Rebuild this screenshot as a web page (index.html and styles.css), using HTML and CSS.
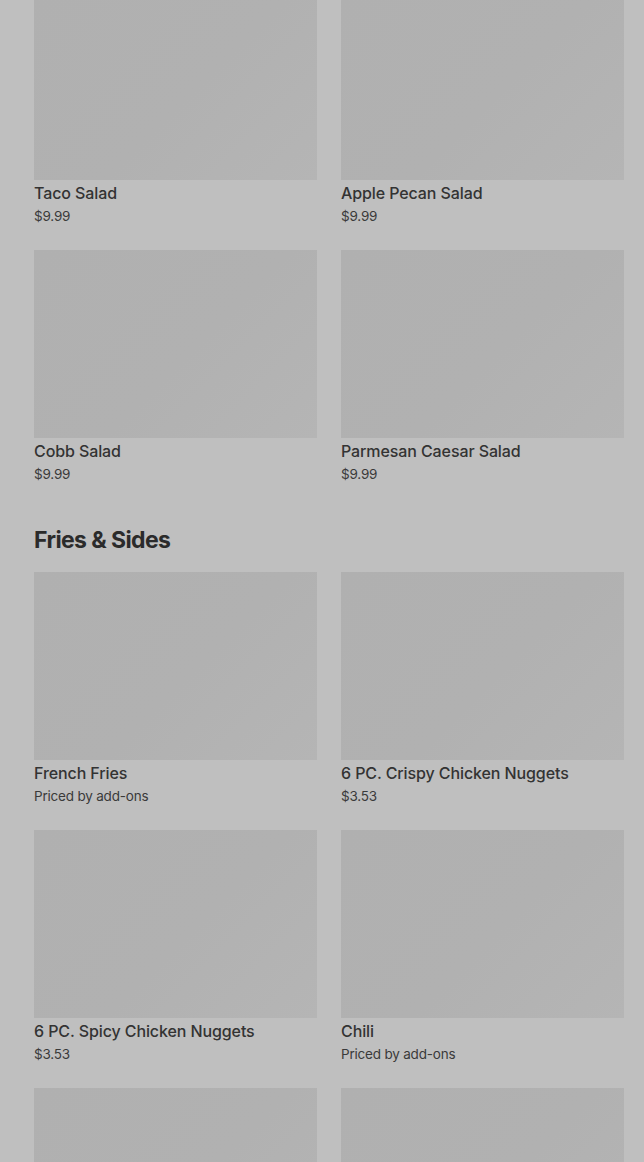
FILE: index.html
```html
<!DOCTYPE html>
<html lang="en">
<head>
    <meta charset="UTF-8">
    <meta name="viewport" content="width=device-width, initial-scale=1.0">
    <title>Menu</title>
    <link rel="stylesheet" href="styles.css">
</head>
<body>
    <div class="menu">
        <section class="razdel">
            <div class="tovary">
                <div class="tovar">
                    <div class="tovar-foto"></div>
                    <p class="tovar-name">Taco Salad</p>
                    <p class="tovar-cena">$9.99</p>
                </div>
                <div class="tovar">
                    <div class="tovar-foto"></div>
                    <p class="tovar-name">Apple Pecan Salad</p>
                    <p class="tovar-cena">$9.99</p>
                </div>
                <div class="tovar">
                    <div class="tovar-foto"></div>
                    <p class="tovar-name">Cobb Salad</p>
                    <p class="tovar-cena">$9.99</p>
                </div>
                <div class="tovar">
                    <div class="tovar-foto"></div>
                    <p class="tovar-name">Parmesan Caesar Salad</p>
                    <p class="tovar-cena">$9.99</p>
                </div>
            </div>
        </section>

        <section class="razdel">
            <h2 class="razdel-title">Fries &amp; Sides</h2>
            <div class="tovary">
                <div class="tovar">
                    <div class="tovar-foto"></div>
                    <p class="tovar-name">French Fries</p>
                    <p class="tovar-cena">Priced by add-ons</p>
                </div>
                <div class="tovar">
                    <div class="tovar-foto"></div>
                    <p class="tovar-name">6 PC. Crispy Chicken Nuggets</p>
                    <p class="tovar-cena">$3.53</p>
                </div>
                <div class="tovar">
                    <div class="tovar-foto"></div>
                    <p class="tovar-name">6 PC. Spicy Chicken Nuggets</p>
                    <p class="tovar-cena">$3.53</p>
                </div>
                <div class="tovar">
                    <div class="tovar-foto"></div>
                    <p class="tovar-name">Chili</p>
                    <p class="tovar-cena">Priced by add-ons</p>
                </div>
                <!-- next row, only the photos fit on screen -->
                <div class="tovar">
                    <div class="tovar-foto"></div>
                </div>
                <div class="tovar">
                    <div class="tovar-foto"></div>
                </div>
            </div>
        </section>
    </div>
</body>
</html>
```

FILE: styles.css
```css
* {
    margin: 0;
    padding: 0;
    box-sizing: border-box;
    font-family: 'Inter', 'Liberation Sans', sans-serif;
}

body {
    background: #bfbfbf;
    color: #333;
    overflow: hidden;
}

.menu {
    padding-left: 34px;
    margin-top: -8px;
}

.razdel-title {
    font-size: 23px;
    font-weight: 700;
    line-height: 32px;
    letter-spacing: -0.6px;
    color: #2b2b2b;
    margin-top: 16px;
    margin-bottom: 16px;
}

.tovary {
    display: grid;
    grid-template-columns: 283px 283px;
    column-gap: 24px;
    row-gap: 23px;
    padding-bottom: 23px;
}

.tovar-foto {
    height: 188px;
    background: linear-gradient(135deg, #b0b0b0 0%, #b1b1b1 55%, #b5b5b5 100%);
}

.tovar-name {
    font-size: 16px;
    font-weight: 500;
    line-height: 24px;
    letter-spacing: -0.1px;
    color: #333;
    margin-top: 1px;
}

.tovar-cena {
    font-size: 13.5px;
    line-height: 22px;
    color: #3a3a3a;
    letter-spacing: -0.2px;
}
```
